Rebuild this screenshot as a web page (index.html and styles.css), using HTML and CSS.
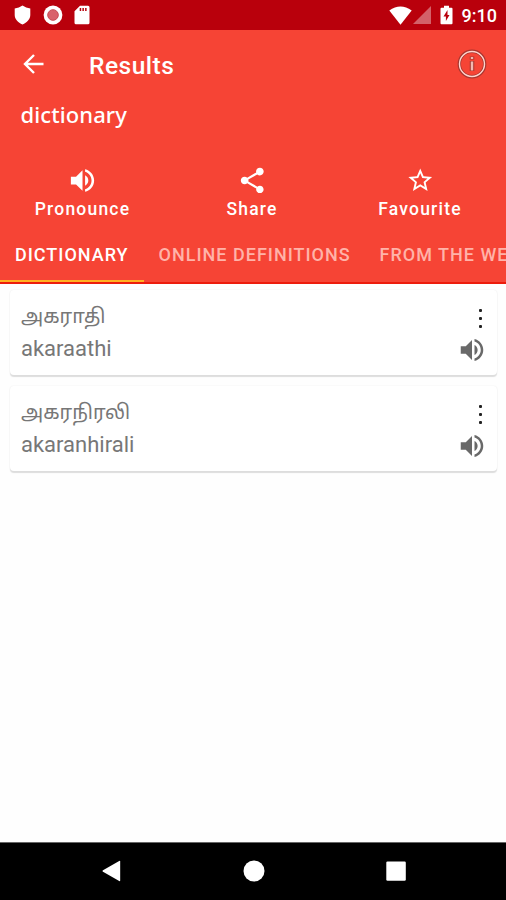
FILE: index.html
```html
<!DOCTYPE html>
<html lang="en">
<head>
<meta charset="utf-8">
<title>Results</title>
<link rel="stylesheet" href="styles.css">
</head>
<body>
<svg class="defs" aria-hidden="true">
  <symbol id="volume" viewBox="0 0 24 24"><path d="M3 9v6h4l5 5V4L7 9H3zm13.500 3c0-1.770-1.020-3.290-2.500-4.030v8.050c1.480-.73 2.500-2.250 2.500-4.020zM14 3.230v2.060c2.890.86 5 3.540 5 6.710s-2.110 5.850-5 6.710v2.060c4.010-.91 7-4.490 7-8.770s-2.990-7.860-7-8.770z"/></symbol>
</svg>
<div class="screen">
  <div class="status">
    <div class="status-left">
      <svg width="17" height="20" viewBox="0 0 17 20"><path d="M8.500.5Q12 3 16.300 3.400V10c0 4-3.300 7.500-7.800 9.600C4 17.500.7 14 .7 10V3.400Q5 3 8.500.5z"/></svg>
      <svg width="20" height="20" viewBox="0 0 20 20"><circle cx="10" cy="10" r="9.400"/><circle class="ring" cx="10" cy="10" r="5.300"/></svg>
      <svg width="16" height="20" viewBox="0 0 16 20"><path fill-rule="evenodd" d="M6 .7h8q1.500 0 1.500 1.500v15.600q0 1.500-1.500 1.500H2q-1.500 0-1.500-1.500V6.200zM5.700 3v3h1.500V3zm2.700 0v3h1.500V3zm2.700 0v3h1.500V3z"/></svg>
    </div>
    <div class="status-right">
      <svg class="wifi" width="23" height="19" viewBox="0 0 23 19"><path d="M.3 4.500Q11.500-3.500 22.700 4.500L11.500 18.700z"/></svg>
      <svg class="signal" width="18" height="18" viewBox="0 0 18 18"><path d="M0 18L18 0v18z"/></svg>
      <svg class="battery" width="13" height="20" viewBox="0 0 13 20"><path fill-rule="evenodd" d="M4 .7h5v2h2.500q1 0 1 1v14.600q0 1-1 1h-10q-1 0-1-1V3.700q0-1 1-1H4zM7.500 5L3.500 11.500h2.400v4.500L9.500 10H7.500z"/></svg>
      <span class="time">9:10</span>
    </div>
  </div>
  <header class="header">
    <div class="toolbar">
      <svg class="back" width="22" height="22" viewBox="0 0 22 22"><path d="M20.500 11H2.500M11 2L2 11l9 9"/></svg>
      <h1>Results</h1>
      <svg class="info" width="30" height="30" viewBox="0 0 30 30"><circle class="halo" cx="15" cy="15" r="12.700"/><circle class="line" cx="15" cy="15" r="12.500"/><path class="halo-stem" d="M15 7.500v3M15 12v10"/><path class="stem" d="M15 8v2M15 12.500v9"/></svg>
    </div>
    <div class="word">dictionary</div>
    <div class="actions">
      <div class="action"><svg width="31" height="31"><use href="#volume"/></svg><span>Pronounce</span></div>
      <div class="action"><svg width="30.500" height="31" viewBox="0 0 24 24"><path d="M18 16.080c-.76 0-1.440.3-1.960.77L8.910 12.700c.05-.23.09-.46.09-.7s-.04-.47-.09-.7l7.050-4.110c.54.5 1.250.81 2.040.81 1.660 0 3-1.340 3-3s-1.340-3-3-3-3 1.340-3 3c0 .24.04.47.09.7L8.040 9.810C7.500 9.310 6.790 9 6 9c-1.660 0-3 1.340-3 3s1.340 3 3 3c.79 0 1.500-.31 2.040-.81l7.120 4.160c-.05.21-.08.43-.08.65 0 1.610 1.310 2.920 2.920 2.920s2.920-1.310 2.920-2.920-1.310-2.920-2.920-2.920z"/></svg><span>Share</span></div>
      <div class="action"><svg class="star" width="28.500" height="28.500" viewBox="0 0 24 24"><path d="M22 9.240l-7.190-.62L12 2 9.190 8.630 2 9.240l5.460 4.730L5.820 21 12 17.270 18.180 21l-1.630-7.030L22 9.240zM12 15.400l-3.760 2.270 1-4.280-3.320-2.880 4.380-.38L12 6.100l1.710 4.040 4.380.38-3.320 2.880 1 4.280L12 15.400z"/></svg><span>Favourite</span></div>
    </div>
    <nav class="tabs">
      <div class="tab active">DICTIONARY</div>
      <div class="tab online">ONLINE DEFINITIONS</div>
      <div class="tab">FROM THE WEB</div>
    </nav>
  </header>
  <main class="results">
    <article class="card">
      <div class="entry"><div class="tamil" lang="ta">அகராதி</div><div class="latin">akaraathi</div></div>
      <div class="tools"><div class="more"><i></i><i></i><i></i></div><svg width="30" height="30"><use href="#volume"/></svg></div>
    </article>
    <article class="card">
      <div class="entry"><div class="tamil" lang="ta">அகரநிரலி</div><div class="latin">akaranhirali</div></div>
      <div class="tools"><div class="more"><i></i><i></i><i></i></div><svg width="30" height="30"><use href="#volume"/></svg></div>
    </article>
  </main>
  <footer class="navbar">
    <svg width="22" height="22" viewBox="0 0 22 22"><path d="M2 10.200L18.200 1q1-.5 1 .5v19q0 1-1 .5L2 11.800q-1.200-.8 0-1.600z"/></svg>
    <svg width="22" height="22" viewBox="0 0 22 22"><circle cx="11" cy="11" r="10.500"/></svg>
    <svg width="22" height="22" viewBox="0 0 22 22"><rect x="1.300" y="1.500" width="19.500" height="19.200" rx="1.200"/></svg>
  </footer>
</div>
</body>
</html>
```
FILE: styles.css
```css
* { box-sizing: border-box; }
body { margin: 0; background: #fff; font-family: Roboto, "Liberation Sans", sans-serif; }
svg { display: block; flex: none; fill: currentColor; }
.defs { display: none; }
.screen { width: 506px; height: 900px; display: flex; flex-direction: column; overflow: hidden; background: #fefefe; white-space: nowrap; }

.status { height: 30px; background: #b9000c; color: #fff; display: flex; justify-content: space-between; align-items: center; padding: 0 9px 0 14px; }
.status-left { display: flex; gap: 11.500px; }
.status-right { display: flex; align-items: center; }
.ring { fill: #d9626b; stroke: #c94b55; stroke-width: 1; }
.signal { opacity: .38; margin-left: 1.500px; }
.battery { margin-left: 9px; }
.time { font-size: 18px; font-weight: 500; line-height: 30px; margin-left: 8.500px; padding-top: 2px; }

.header { height: 254px; background: #f64435; color: #fff; display: flex; flex-direction: column; }
.toolbar { height: 68px; display: flex; align-items: center; padding: 0 19px 0 23px; }
.back { fill: none; stroke: #fff; stroke-width: 2.400; }
h1 { margin: 4px 0 0 44px; font-size: 24.500px; line-height: 30px; font-weight: 500; letter-spacing: .5px; flex: 1; }
.info { fill: none; }
.halo { stroke: #a9362f; stroke-width: 3.400; }
.line { stroke: #ffd5cf; stroke-width: 1.400; }
.halo-stem { stroke: #a9362f; stroke-width: 4.500; }
.stem { stroke: #f3b9b1; stroke-width: 2.400; }
.word { font-family: "Noto Sans", sans-serif; font-size: 22px; font-weight: 500; line-height: 30px; height: 66px; padding: 2px 0 0 20.500px; letter-spacing: .1px; }
.actions { display: grid; grid-template-columns: 165px 174px 162px; height: 64px; }
.action { display: flex; flex-direction: column; align-items: center; padding-top: 2px; font-size: 17.500px; font-weight: 500; line-height: 22px; letter-spacing: 1.200px; }
.action span { margin-top: 2px; }
.star { margin: 1.500px 0 1px; }
.tabs { flex: 1; display: flex; border-bottom: 2px solid #ec1c0c; color: #ffb3a9; font-size: 18px; font-weight: 500; letter-spacing: 1px; line-height: 22px; }
.tab { padding: 18px 15px 0; height: 56px; }
.active { width: 144px; color: #fff; border-bottom: 2px solid #ffb021; }
.online { width: 221px; }

.results { flex: 1; display: flex; flex-direction: column; gap: 11px; padding: 6px 9px 0 10px; }
.card { height: 85px; border-radius: 4px; background: #fff; box-shadow: 0 1.500px 1px #ddd, 0 0 2px #eee; display: flex; justify-content: space-between; padding: 8px 10px 0 11px; color: #777; }
.tamil { font-family: "Noto Sans Tamil", "Noto Sans", sans-serif; font-size: 19.800px; line-height: 34px; height: 35px; padding-top: 3px; }
.latin { font-size: 22px; line-height: 32px; }
.tools { display: flex; flex-direction: column; align-items: flex-end; color: #696969; }
.more { height: 37px; width: 13px; padding: 10.500px 0 0 0; display: flex; flex-direction: column; align-items: center; gap: 5.300px; }
.more i { width: 3px; height: 3px; flex: none; background: #222; border-radius: 1px; }

.navbar { height: 58px; background: #000; border-top: 1px solid #666; color: #fff; display: flex; justify-content: space-between; padding: 17px 99px 0 101px; }
```
